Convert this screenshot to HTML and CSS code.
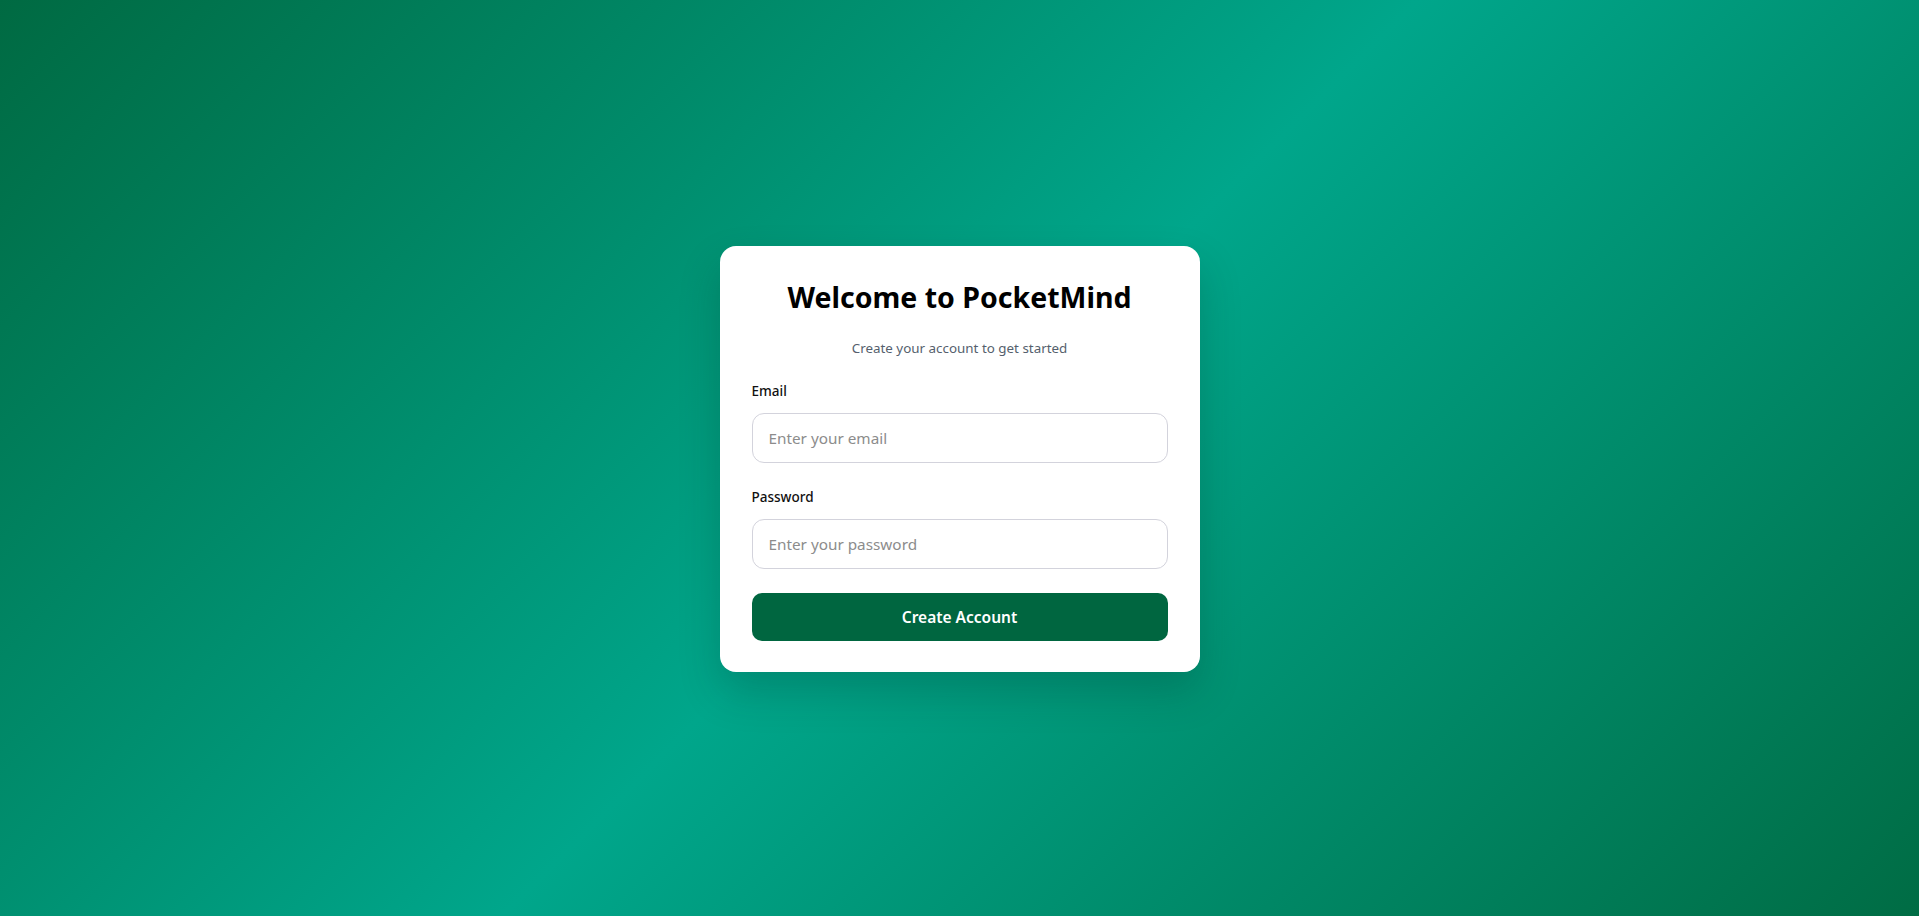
FILE: index.html
```html
<!DOCTYPE html>
<html lang="en">
<head>
<meta charset="utf-8">
<title>PocketMind - Sign up</title>
<link rel="stylesheet" href="styles.css">
</head>
<body>
<main class="page">
  <form class="card">
    <h1 class="title">Welcome to PocketMind</h1>
    <p class="subtitle">Create your account to get started</p>
    <div class="field">
      <label class="label" for="email">Email</label>
      <input class="input" id="email" type="email" placeholder="Enter your email">
    </div>
    <div class="field">
      <label class="label" for="password">Password</label>
      <input class="input" id="password" type="password" placeholder="Enter your password">
    </div>
    <button class="submit" type="button">Create Account</button>
  </form>
</main>
</body>
</html>
```
FILE: styles.css
```css
* { box-sizing: border-box; }
html, body { margin: 0; height: 100%; }
body {
  font-family: "Noto Sans", "DejaVu Sans", sans-serif;
  background: linear-gradient(135deg, #006a42 0%, #00a68b 50%, #006c44 100%);
  min-height: 100vh;
}
.page {
  min-height: 100vh;
  display: flex;
  align-items: center;
  justify-content: center;
}
.card {
  width: 480px;
  background: #fff;
  border-radius: 16px;
  padding: 32px 32px 31px;
  box-shadow: 0 20px 40px rgba(0, 40, 30, 0.22);
  display: flex;
  flex-direction: column;
  margin-top: 1px;
}
.title {
  margin: 0;
  font-size: 28.5px;
  line-height: 38px;
  font-weight: 700;
  text-align: center;
  color: #000;
}
.subtitle {
  margin: 22px 0 0;
  font-size: 13.4px;
  line-height: 21px;
  text-align: center;
  color: #555f6d;
}
.field {
  display: flex;
  flex-direction: column;
  gap: 11px;
  margin-top: 22px;
}
.field + .field { margin-top: 24px; }
.label {
  font-size: 13.5px;
  line-height: 21px;
  font-weight: 500;
  color: #111;
}
.input {
  height: 50px;
  border: 1px solid #d3d3dc;
  border-radius: 12px;
  padding: 0 16px;
  font-family: inherit;
  font-size: 15.3px;
  color: #222;
  outline: none;
  background: #fff;
}
.input::placeholder { color: #8c8c8c; }
.submit {
  margin-top: 24px;
  height: 48px;
  border: none;
  border-radius: 10px;
  background: #006640;
  color: #fff;
  font-family: inherit;
  font-size: 15.5px;
  font-weight: 600;
  cursor: pointer;
}
```
